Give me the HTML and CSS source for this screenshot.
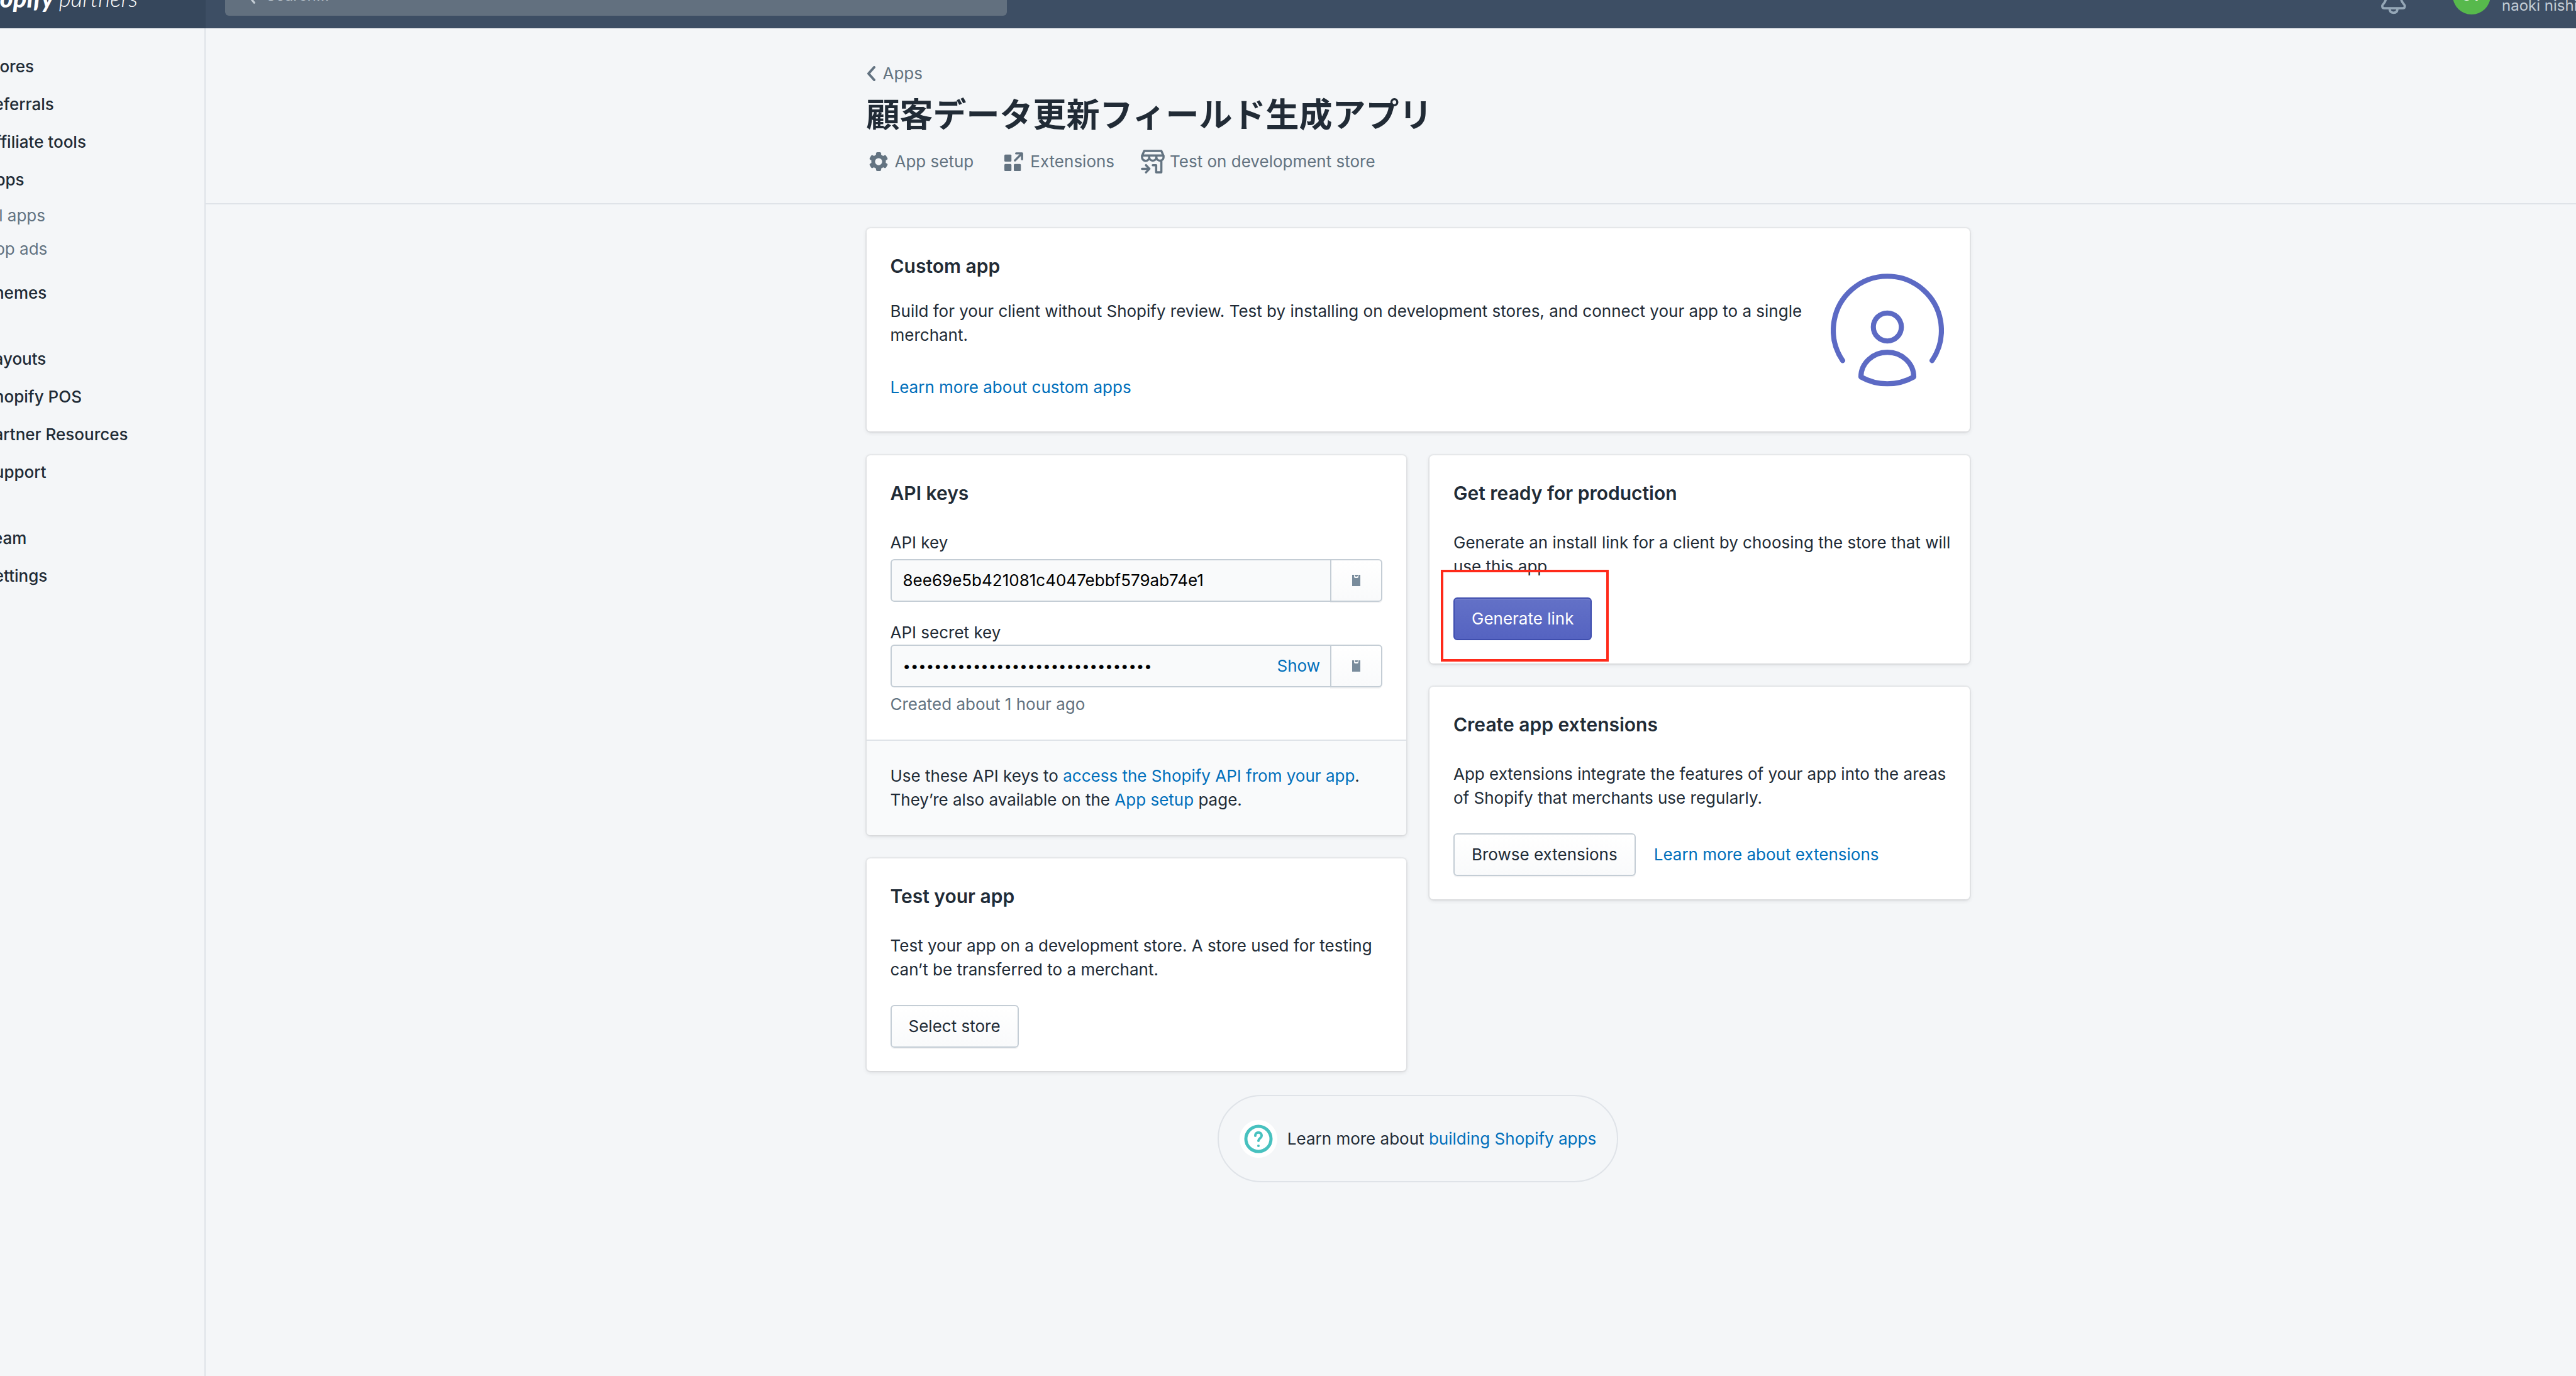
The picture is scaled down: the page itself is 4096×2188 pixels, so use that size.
FILE: index.html
```html
<!DOCTYPE html>
<html lang="en">
<head>
<meta charset="utf-8">
<title>Shopify Partners</title>
<link rel="stylesheet" href="styles.css">
</head>
<body>
<div class="frame">
  <header class="topbar">
    <a class="logo" href="#"><b>shopify</b><span>partners</span></a>
    <div class="topbar-main">
      <label class="search">
        <svg class="search-icon" viewBox="0 0 40 40"><circle cx="17" cy="15" r="11"/><path d="M25 23l9 11"/></svg>
        <input type="search" placeholder="Search..." aria-label="Search">
      </label>
      <button class="bell" aria-label="Notifications">
        <svg viewBox="0 0 141 200"><path d="M12 153c0-8 18-16 20-40 0-35 8-60 38-60s38 25 38 60c2 24 20 32 20 40 0 10-5 12-12 12H24c-7 0-12-2-12-12z"/><path d="M50 167c0 14 8 21 20 21s20-7 20-21"/></svg>
      </button>
      <button class="user">
        <span class="avatar">ST</span>
        <span class="user-text"><span>STORE</span><span class="user-name">naoki nishi</span></span>
      </button>
    </div>
  </header>

  <div class="body">
    <nav class="sidebar">
      <ul>
        <li><a href="#">Stores</a></li>
        <li><a href="#">Referrals</a></li>
        <li><a href="#">Affiliate tools</a></li>
        <li><a href="#">Apps</a>
          <ul class="sub">
            <li><a href="#">All apps</a></li>
            <li><a href="#">App ads</a></li>
          </ul>
        </li>
        <li><a href="#">Themes</a></li>
      </ul>
      <ul>
        <li><a href="#">Payouts</a></li>
        <li><a href="#">Shopify POS</a></li>
        <li><a href="#">Partner Resources</a></li>
        <li><a href="#">Support</a></li>
      </ul>
      <ul>
        <li><a href="#">Team</a></li>
        <li><a href="#">Settings</a></li>
      </ul>
    </nav>

    <main class="main">
      <div class="page-head">
        <div class="container">
          <a class="back" href="#"><svg viewBox="0 0 14 24"><path d="M12 2L3 12l9 10"/></svg>Apps</a>
          <h1 lang="ja">顧客データ更新フィールド生成アプリ</h1>
          <div class="actions">
            <a href="#"><svg class="icon" viewBox="33 36 96 96"><g fill="currentColor"><rect x="68" y="36" width="26" height="96" rx="7"/><rect x="68" y="36" width="26" height="96" rx="7" transform="rotate(60 81 84)"/><rect x="68" y="36" width="26" height="96" rx="7" transform="rotate(120 81 84)"/><circle cx="81" cy="84" r="37"/></g><circle class="hole" cx="81" cy="84" r="18"/></svg>App setup</a>
            <a href="#"><svg class="icon" viewBox="723 30 96 96"><g fill="currentColor"><rect x="723" y="42" width="36" height="36" rx="5"/><rect x="723" y="90" width="36" height="36" rx="5"/><rect x="771" y="90" width="36" height="36" rx="5"/></g><path class="line" d="M777 72l34-34M783 36h30v30"/></svg>Extensions</a>
            <a class="wide" href="#"><svg class="icon-lg" viewBox="1413 24 120 120"><path class="line" d="M1430 30h86l10 23h-106zM1419 54v8a17 17 0 0 0 36 0v-8M1455 62a18 17 0 0 0 36 0v-8M1491 62a18 17 0 0 0 36 0v-8M1473 102h17v36h26V82M1419 120h34M1439 102l17 18-17 18"/></svg>Test on development store</a>
          </div>
        </div>
      </div>

      <div class="container content">
        <section class="card intro">
          <div>
            <h2>Custom app</h2>
            <p>Build for your client without Shopify review. Test by installing on development stores, and connect your app to a single merchant.</p>
            <p class="more"><a href="#">Learn more about custom apps</a></p>
          </div>
          <svg class="person" viewBox="0 0 574 574"><path d="M60 441A274 274 0 1 1 514 441"/><circle cx="287" cy="271" r="71"/><path d="M153 524C153 455 213 399 287 399S421 455 421 524A274 274 0 0 1 153 524z"/></svg>
        </section>

        <div class="columns">
          <div class="column">
            <section class="card keys">
              <div class="keys-body">
                <h2>API keys</h2>
                <label for="key">API key</label>
                <div class="field">
                  <div class="box"><input id="key" type="text" readonly value="8ee69e5b421081c4047ebbf579ab74e1"></div>
                  <button class="copy" aria-label="Copy API key"><svg viewBox="0 0 15 20"><path d="M1 1h3v3a2 2 0 0 0 2 2h3a2 2 0 0 0 2-2V1h3v18H1z"/><path d="M5 1h5v2l-2 1h-1l-2-1z"/></svg></button>
                </div>
                <label class="second" for="secret">API secret key</label>
                <div class="field">
                  <div class="box"><input id="secret" type="password" readonly value="00000000000000000000000000000000"><button class="show">Show</button></div>
                  <button class="copy" aria-label="Copy API secret key"><svg viewBox="0 0 15 20"><path d="M1 1h3v3a2 2 0 0 0 2 2h3a2 2 0 0 0 2-2V1h3v18H1z"/><path d="M5 1h5v2l-2 1h-1l-2-1z"/></svg></button>
                </div>
                <p class="hint">Created about 1 hour ago</p>
              </div>
              <p class="keys-foot">Use these API keys to <a href="#">access the Shopify API from your app</a>.<br>They’re also available on the <a href="#">App setup</a> page.</p>
            </section>
            <section class="card tall">
              <h2>Test your app</h2>
              <p class="text">Test your app on a development store. A store used for testing can’t be transferred to a merchant.</p>
              <button class="btn">Select store</button>
            </section>
          </div>
          <div class="column">
            <section class="card">
              <h2>Get ready for production</h2>
              <p class="text">Generate an install link for a client by choosing the store that will use this app.</p>
              <div class="marked"><button class="btn primary">Generate link</button><span class="marker"></span></div>
            </section>
            <section class="card tall">
              <h2>Create app extensions</h2>
              <p class="text">App extensions integrate the features of your app into the areas of Shopify that merchants use regularly.</p>
              <div class="row"><button class="btn">Browse extensions</button><a href="#">Learn more about extensions</a></div>
            </section>
          </div>
        </div>

        <div class="help">
          <svg viewBox="0 0 60 60"><circle class="disc" cx="30" cy="30" r="30"/><circle class="ring" cx="30" cy="30" r="20"/><path class="mark" d="M25 25c0-7 10-7 10 0 0 4-5 4-5 8"/><circle class="dot" cx="30" cy="41" r="2"/></svg>
          <p>Learn more about <a href="#">building Shopify apps</a></p>
        </div>
      </div>
    </main>
  </div>
</div>
</body>
</html>
```
FILE: styles.css
```css
* { box-sizing: border-box; }
html, body { margin: 0; height: 100%; overflow: hidden; }
body {
  background: #f4f6f8;
  color: #212b36;
  font: 400 26px/38px Inter, "Noto Sans CJK JP", sans-serif;
}
h1, h2, p, ul { margin: 0; padding: 0; }
ul { list-style: none; }
a { color: #006fbb; text-decoration: none; }
button, input { font: inherit; color: inherit; margin: 0; }

/* The shell runs past the window on the top, left and right. */
.frame {
  display: flex;
  flex-direction: column;
  min-height: calc(100% + 60px);
  margin: -60px -86px 0 -124px;
}

.topbar { display: flex; height: 105px; background: #3d4e64; }
.logo {
  display: flex;
  flex: 0 0 451px;
  align-items: center;
  justify-content: flex-end;
  gap: 8px;
  padding: 8px 108px 0 0;
  background: #36475c;
  color: #fff;
  font: italic 300 37px/48px Lato, sans-serif;
}
.logo b { font-size: 40px; font-weight: 900; }
.topbar-main { display: flex; flex: 1; align-items: center; padding: 0 0 0 31px; }
.search {
  display: flex;
  align-items: center;
  gap: 14px;
  width: 1243px;
  height: 64px;
  padding: 0 19px;
  border-radius: 6px;
  background: #62707f;
}
.search-icon { width: 32px; height: 32px; fill: none; stroke: #c4cdd5; stroke-width: 4; stroke-linecap: round; }
.search input { flex: 1; padding: 0; border: 0; outline: 0; background: none; font-size: 24px; }
.search input::placeholder { color: #c4cdd5; opacity: 1; }
.bell { margin-left: auto; padding: 0; border: 0; background: none; }
.bell svg { display: block; width: 44px; height: 62px; fill: none; stroke: #95a7b7; stroke-width: 12; }
.user {
  display: flex;
  align-items: center;
  gap: 18px;
  width: 282px;
  margin-left: 72px;
  padding: 0;
  border: 0;
  background: none;
  text-align: left;
}
.avatar {
  flex: none;
  width: 60px;
  height: 60px;
  border-radius: 50%;
  background: #57b94c;
  color: #fff;
  font: 600 24px/60px Inter, sans-serif;
  text-align: center;
}
.user-text { display: flex; flex-direction: column; color: #fff; font-size: 24px; line-height: 32px; white-space: nowrap; }
.user-name { color: #c4cdd5; }

.body { display: flex; flex: 1; }
.sidebar { flex: 0 0 451px; padding: 31px 0 0 98px; border-right: 2px solid #dfe3e8; }
.sidebar ul + ul { margin-top: 45px; }
.sidebar a { display: block; color: #212b36; font-weight: 500; line-height: 60px; }
.sidebar .sub { padding-bottom: 14px; }
.sidebar .sub a { color: #637381; font-weight: 400; line-height: 53px; }

.main { flex: 1; min-width: 0; }
.container { width: 1754px; margin: 0 auto; }
.page-head { padding: 53px 0 47px; border-bottom: 2px solid #dfe3e8; }
.back { display: flex; align-items: center; gap: 12px; width: max-content; color: #637381; }
.back svg { width: 14px; height: 24px; fill: none; stroke: #637381; stroke-width: 4; stroke-linecap: round; stroke-linejoin: round; }
h1 { font: 600 53px/66px "Noto Sans CJK JP", sans-serif; margin: 10px 0 26px; }
.actions { display: flex; align-items: center; gap: 49px; height: 38px; padding-left: 4px; }
.actions a { display: flex; align-items: center; gap: 11px; color: #637381; }
.actions .wide { gap: 8px; margin-left: -7px; }
.icon { width: 30px; height: 30px; }
.icon-lg { width: 38px; height: 38px; }
.hole { fill: #f4f6f8; }
.line { fill: none; stroke: currentColor; stroke-width: 11; stroke-linecap: round; stroke-linejoin: round; }

.content { display: flex; flex-direction: column; gap: 38px; padding-top: 38px; }
.card {
  padding: 38px 38px 37px;
  border-radius: 6px;
  background: #fff;
  box-shadow: 0 0 0 2px rgba(63, 63, 68, .05), 0 2px 6px rgba(63, 63, 68, .15);
}
h2 { margin-bottom: 37px; font: 600 30px/45px Inter, sans-serif; }
.text { margin-right: -20px; }
.intro { display: flex; align-items: center; justify-content: space-between; gap: 32px; padding-bottom: 51px; }
.intro h2 { margin-bottom: 30px; }
.more { margin-top: 45px; }
.person {
  flex: none;
  width: 180px;
  height: 180px;
  margin: 14px 3px 0 0;
  fill: none;
  stroke: #5c6ac4;
  stroke-width: 26;
  stroke-linecap: round;
  stroke-linejoin: round;
}
.columns { display: grid; grid-template-columns: 1fr 1fr; gap: 37px; align-items: start; }
.column { display: flex; flex-direction: column; gap: 37px; }

.keys { padding: 0; }
.keys-body { padding: 38px 38px 37px; }
.keys-foot { padding: 37px 38px; border-top: 2px solid #dfe3e8; border-radius: 0 0 6px 6px; background: #f9fafb; }
label { display: block; }
.second { margin-top: 30px; }
.field { display: flex; height: 68px; }
.keys-body label:first-of-type + .field { margin-top: 7px; }
.box {
  display: flex;
  flex: 1;
  align-items: center;
  padding: 0 16px 0 18px;
  border: 2px solid #c4cdd5;
  border-right: 0;
  border-radius: 6px 0 0 6px;
  background: #f9fafb;
}
.box input { flex: 1; min-width: 0; padding: 0; border: 0; outline: 0; background: none; color: #000; }
.box input[type="password"] { font-size: 22px; }
.show { padding: 0; border: 0; background: none; color: #006fbb; }
.copy {
  display: flex;
  flex: 0 0 83px;
  align-items: center;
  justify-content: center;
  border: 2px solid #c4cdd5;
  border-radius: 0 6px 6px 0;
  background: linear-gradient(#fff, #f9fafb);
  box-shadow: 0 2px 0 rgba(22, 29, 37, .05);
}
.copy svg { width: 15px; height: 20px; fill: #798c9c; }
.hint { margin-top: 8px; color: #637381; }

.btn {
  display: block;
  height: 68px;
  margin-top: 30px;
  padding: 0 27px;
  border: 2px solid #c4cdd5;
  border-radius: 6px;
  background: linear-gradient(#fff, #f9fafb);
  box-shadow: 0 2px 0 rgba(22, 29, 37, .05);
}
.primary {
  border-color: #3f4eae;
  background: linear-gradient(#6371c7, #5563c1);
  box-shadow: inset 0 2px 0 #6f7bcb;
  color: #fff;
}
.tall .btn { margin-top: 37px; }
.row { display: flex; }
.row a { margin: 52px 0 0 29px; }
.marked { position: relative; width: max-content; }
.marker { position: absolute; inset: -44px -27px -34px -20px; border: 4px solid #ff2a1a; }

.help {
  display: flex;
  align-items: center;
  align-self: center;
  gap: 16px;
  height: 139px;
  padding: 0 33px;
  border: 2px solid #dfe3e8;
  border-radius: 70px;
}
.help svg { width: 60px; height: 60px; fill: none; stroke: #47c1bf; stroke-width: 5; }
.help .disc { fill: #fff; stroke: none; }
.help .mark { stroke-width: 4; stroke-linecap: round; }
.help .dot { fill: #47c1bf; stroke: none; }
```
